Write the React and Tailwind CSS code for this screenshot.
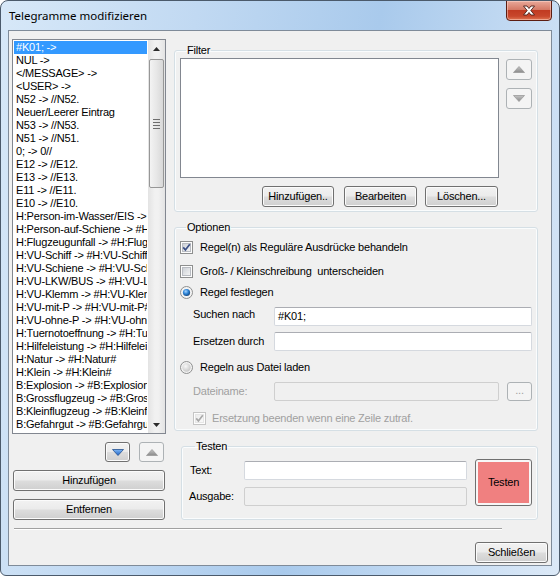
import React from 'react';

const items = [
  '#K01; ->', 'NUL ->', '</MESSAGE> ->', '<USER> ->', 'N52 -> //N52.', 'Neuer/Leerer Eintrag',
  'N53 -> //N53.', 'N51 -> //N51.', '0; -> 0//', 'E12 -> //E12.', 'E13 -> //E13.', 'E11 -> //E11.',
  'E10 -> //E10.', 'H:Person-im-Wasser/EIS -> #H:Person-im-Wasser/EIS#',
  'H:Person-auf-Schiene -> #H:Person-auf-Schiene#', 'H:Flugzeugunfall -> #H:Flugzeugunfall#',
  'H:VU-Schiff -> #H:VU-Schiff#', 'H:VU-Schiene -> #H:VU-Schiene#', 'H:VU-LKW/BUS -> #H:VU-LKW/BUS#',
  'H:VU-Klemm -> #H:VU-Klemm#', 'H:VU-mit-P -> #H:VU-mit-P#', 'H:VU-ohne-P -> #H:VU-ohne-P#',
  'H:Tuernotoeffnung -> #H:Tuernotoeffnung#', 'H:Hilfeleistung -> #H:Hilfeleistung#',
  'H:Natur -> #H:Natur#', 'H:Klein -> #H:Klein#', 'B:Explosion -> #B:Explosion#',
  'B:Grossflugzeug -> #B:Grossflugzeug#', 'B:Kleinflugzeug -> #B:Kleinflugzeug#',
  'B:Gefahrgut -> #B:Gefahrgut#',
];

const btnFace =
  'bg-[linear-gradient(#f2f2f2_0%,#ebebeb_48%,#dddddd_52%,#cfcfcf_100%)] shadow-[inset_0_0_0_1px_#fbfbfb]';

function Btn({ className = '', children, disabled }) {
  return (
    <div
      className={`flex items-center justify-center rounded-[3px] border shrink-0 ${
        disabled ? 'border-[#adb2b5] bg-[#f4f4f4]' : `border-[#707070] ${btnFace}`
      } ${className}`}
    >
      {children}
    </div>
  );
}

function Arrow({ up, blue }) {
  const id = `ag${up ? 'u' : 'd'}${blue ? 'b' : 'g'}`;
  return (
    <svg width="12" height="7" viewBox="0 0 12 7">
      <defs>
        <linearGradient id={id} x1="0" y1="0" x2="0" y2="1">
          <stop offset="0" stopColor={blue ? '#7fb8f5' : '#c4c4c4'} />
          <stop offset="1" stopColor={blue ? '#1c5fc4' : '#8a8a8a'} />
        </linearGradient>
      </defs>
      <path
        d={up ? 'M6 0.5 L11.5 6.5 H0.5 Z' : 'M0.5 0.5 H11.5 L6 6.5 Z'}
        fill={`url(#${id})`}
        stroke={blue ? '#24508f' : '#9a9a9a'}
        strokeWidth="0.8"
        strokeLinejoin="round"
      />
    </svg>
  );
}

function Check({ checked, disabled, id }) {
  return (
    <svg width="13" height="13" viewBox="0 0 13 13" className="shrink-0">
      <defs>
        <linearGradient id={id} x1="0" y1="0" x2="1" y2="1">
          <stop offset="0" stopColor={disabled ? '#ececec' : '#cbcfd5'} />
          <stop offset="1" stopColor={disabled ? '#fafafa' : '#f6f6f6'} />
        </linearGradient>
      </defs>
      <rect x="0.5" y="0.5" width="12" height="12" fill="#fdfdfd" stroke={disabled ? '#c5c5c5' : '#8e8f8f'} />
      <rect x="2.5" y="2.5" width="8" height="8" fill={`url(#${id})`} stroke={disabled ? '#e6e6e6' : '#b9bcc2'} />
      {checked && (
        <path
          d="M3.2 6.4 L5.4 8.9 L9.8 3.2"
          fill="none"
          stroke={disabled ? '#a8a8a8' : '#3b4f86'}
          strokeWidth="1.7"
        />
      )}
    </svg>
  );
}

function Radio({ checked, id }) {
  return (
    <svg width="13" height="13" viewBox="0 0 13 13" className="shrink-0">
      <defs>
        <radialGradient id={id} cx="0.4" cy="0.35" r="0.7">
          <stop offset="0" stopColor={checked ? '#a6d4ff' : '#f8f8f8'} />
          <stop offset="0.5" stopColor={checked ? '#2c83d6' : '#dedede'} />
          <stop offset="1" stopColor={checked ? '#123f74' : '#c5c5c5'} />
        </radialGradient>
      </defs>
      <circle cx="6.5" cy="6.5" r="6" fill="#f3f3f3" stroke="#8e8f8f" />
      <circle cx="6.5" cy="6.5" r={checked ? 3.6 : 4.2} fill={`url(#${id})`} />
    </svg>
  );
}

function Input({ className = '', disabled, children }) {
  return (
    <div
      className={`h-[19px] shrink-0 rounded-[2px] border flex items-center pl-[3px] ${
        disabled ? 'border-[#cfcfcf] bg-[#f0f0f0]' : 'border-[#d5d9df] border-t-[#abadb3] bg-white'
      } ${className}`}
    >
      {children}
    </div>
  );
}

function Group({ title, className = '', children }) {
  return (
    <fieldset className={`border border-[#d5dfe5] rounded-[3px] shadow-[inset_0_0_0_1px_#fafcfd] ${className}`}>
      <legend className="ml-[6px] px-[1px] leading-[13px]">{title}</legend>
      {children}
    </fieldset>
  );
}

function ScrollBar() {
  return (
    <div className="w-[17px] shrink-0 flex flex-col bg-[linear-gradient(90deg,#e3e3e3,#f1f1f1_40%,#f1f1f1_60%,#e3e3e3)]">
      <div className="h-[17px] flex items-center justify-center">
        <svg width="7" height="4" viewBox="0 0 7 4"><path d="M3.5 0 L7 4 H0 Z" fill="#2b2b2b" /></svg>
      </div>
      <div className="flex-1 px-[1px] pt-[2px]">
        <div className="h-[129px] rounded-[2px] border border-[#979797] bg-[linear-gradient(90deg,#f3f3f3,#e7e7e7_50%,#d8d8d8)] flex flex-col items-center justify-center gap-[2px]">
          <div className="w-[7px] h-[1px] bg-[#6e6e6e]" />
          <div className="w-[7px] h-[1px] bg-[#6e6e6e]" />
          <div className="w-[7px] h-[1px] bg-[#6e6e6e]" />
          <div className="w-[7px] h-[1px] bg-[#6e6e6e]" />
        </div>
      </div>
      <div className="h-[17px] flex items-center justify-center">
        <svg width="7" height="4" viewBox="0 0 7 4"><path d="M0 0 H7 L3.5 4 Z" fill="#2b2b2b" /></svg>
      </div>
    </div>
  );
}

export default function App() {
  return (
    <div
      className="w-[560px] h-[576px] flex flex-col rounded-t-[8px] rounded-b-[6px] border border-[#4b5a6b] bg-[linear-gradient(100deg,#d7e8f8_0%,#c1d9f2_30%,#a9caec_58%,#c6dcf3_82%,#dce9f7_100%)] text-black text-[11px] tracking-[-0.2px] relative overflow-hidden"
      style={{ fontFamily: '"Liberation Sans", Arial, sans-serif' }}
    >
      {/* title bar */}
      <div className="h-[29px] shrink-0 flex items-center pl-[8px] pt-[1px]">
        <span className="text-[11.5px] tracking-normal" style={{ fontFamily: '"Noto Sans", "Liberation Sans", sans-serif' }}>
          Telegramme modifizieren
        </span>
      </div>
      <div className="absolute top-[-1px] right-[7px] w-[46px] h-[21px] rounded-b-[4px] border border-[#5c1d12] bg-[linear-gradient(#e9a99a_0%,#d57a66_45%,#c13b22_50%,#c8472c_80%,#e07552_100%)] shadow-[inset_0_0_0_1px_rgba(255,220,210,0.5)] flex items-center justify-center">
        <svg width="14" height="11" viewBox="0 0 14 11">
          <path
            d="M1.5 1 H5 L7 3.5 L9 1 H12.5 L8.8 5.5 L12.5 10 H9 L7 7.5 L5 10 H1.5 L5.2 5.5 Z"
            fill="#fff"
            stroke="#4a1e16"
            strokeWidth="0.9"
            strokeLinejoin="round"
          />
        </svg>
      </div>

      {/* client area */}
      <div className="ml-[7px] w-[544px] h-[536px] shrink-0 border border-[#7f8b99] bg-[#f0f0f0] flex flex-col">
        <div className="flex pt-[8px] pl-[3px]">
          {/* left column */}
          <div className="w-[154px] shrink-0 flex flex-col">
            <div className="h-[395px] border border-[#828790] bg-white flex">
              <div className="flex-1 min-w-0 overflow-hidden pt-[1px]">
                {items.map((t, i) => (
                  <div
                    key={i}
                    className={`h-[13px] leading-[13px] mx-[1px] pl-[2px] whitespace-nowrap overflow-hidden ${
                      i === 0 ? 'bg-[#3399ff] text-white' : ''
                    }`}
                  >
                    {t}
                  </div>
                ))}
              </div>
              <ScrollBar />
            </div>
            <div className="flex justify-end gap-[9px] pr-[2px] mt-[8px]">
              <Btn className="w-[25px] h-[20px]">
                <Arrow blue />
              </Btn>
              <Btn className="w-[25px] h-[20px]" disabled>
                <Arrow up />
              </Btn>
            </div>
            <Btn className="mx-[1px] h-[21px] mt-[8px]">Hinzufügen</Btn>
            <Btn className="mx-[1px] h-[21px] mt-[8px]">Entfernen</Btn>
          </div>

          {/* right column */}
          <div className="ml-[8px] w-[364px] shrink-0 flex flex-col mt-[5px]">
            <Group title="Filter" className="px-[5px] pb-[4px]">
              <div className="flex mt-[1px]">
                <div className="w-[319px] flex flex-col">
                  <div className="h-[120px] border border-[#828790] bg-white" />
                  <div className="flex justify-end pr-[1px] mt-[8px]">
                    <Btn className="w-[72px] h-[21px]">Hinzufügen..</Btn>
                    <Btn className="w-[73px] h-[21px] ml-[10px]">Bearbeiten</Btn>
                    <Btn className="w-[73px] h-[21px] ml-[8px]">Löschen...</Btn>
                  </div>
                </div>
                <div className="ml-[7px] flex flex-col">
                  <Btn className="w-[26px] h-[21px] mt-[1px]" disabled>
                    <Arrow up />
                  </Btn>
                  <Btn className="w-[26px] h-[21px] mt-[8px]" disabled>
                    <Arrow />
                  </Btn>
                </div>
              </div>
            </Group>

            <Group title="Optionen" className="mt-[9px] px-[5px] pb-[4px]">
              <div className="h-[16px] mt-[5px] flex items-center">
                <Check checked id="c1" />
                <span className="ml-[7px]">Regel(n) als Reguläre Ausdrücke behandeln</span>
              </div>
              <div className="h-[16px] mt-[8px] flex items-center">
                <Check id="c2" />
                <span className="ml-[7px]">Groß- / Kleinschreibung&nbsp; unterscheiden</span>
              </div>
              <div className="h-[16px] mt-[5px] flex items-center">
                <Radio checked id="r1" />
                <span className="ml-[7px]">Regel festlegen</span>
              </div>
              <div className="h-[19px] mt-[7px] flex items-center pl-[13px]">
                <span className="w-[81px] pb-[5px]">Suchen nach</span>
                <Input className="w-[258px]">#K01;</Input>
              </div>
              <div className="h-[19px] mt-[6px] flex items-center pl-[13px]">
                <span className="w-[81px]">Ersetzen durch</span>
                <Input className="w-[258px]" />
              </div>
              <div className="h-[16px] mt-[8px] flex items-center">
                <Radio id="r2" />
                <span className="ml-[7px]">Regeln aus Datei laden</span>
              </div>
              <div className="h-[19px] mt-[7px] flex items-center pl-[13px] text-[#a0a0a0]">
                <span className="w-[81px]">Dateiname:</span>
                <Input className="w-[225px]" disabled />
                <Btn className="w-[25px] h-[19px] ml-[8px] text-[#a0a0a0] pb-[3px]" disabled>
                  ...
                </Btn>
              </div>
              <div className="h-[16px] mt-[9px] flex items-center pl-[13px]">
                <Check checked disabled id="c3" />
                <span className="ml-[6px] text-[#a0a0a0]">Ersetzung beenden wenn eine Zeile zutraf.</span>
              </div>
            </Group>

            <Group title="Testen" className="mt-[9px] ml-[7px] pl-[7px] pr-[5px] pb-[13px]">
              <div className="flex items-start">
                <div className="flex flex-col mt-[8px]">
                  <div className="h-[19px] flex items-center">
                    <span className="w-[55px] pl-[1px]">Text:</span>
                    <Input className="w-[223px]" />
                  </div>
                  <div className="h-[19px] flex items-center mt-[7px]">
                    <span className="w-[55px]">Ausgabe:</span>
                    <Input className="w-[223px]" disabled />
                  </div>
                </div>
                <div className="ml-[8px] mt-[6px] w-[57px] h-[47px] rounded-[3px] border border-[#707070] p-[2px] bg-[#f7f7f7]">
                  <div className="w-full h-full bg-[#f08080] flex items-center justify-center">Testen</div>
                </div>
              </div>
            </Group>
          </div>
        </div>

        <div className="ml-[5px] mt-[8px] w-[488px] h-[1px] bg-[#a0a0a0] shadow-[0_1px_0_#ffffff]" />
        <div className="flex justify-end pr-[3px] mt-[13px]">
          <Btn className="w-[73px] h-[21px]">Schließen</Btn>
        </div>
      </div>
    </div>
  );
}
